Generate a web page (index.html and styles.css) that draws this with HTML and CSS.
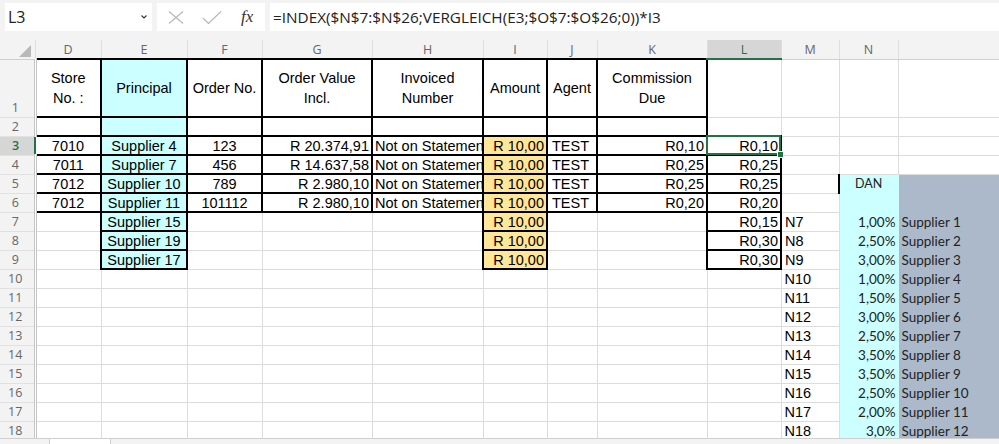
FILE: index.html
```html
<!DOCTYPE html>
<html lang="de">
<head>
  <meta charset="UTF-8">
  <meta name="viewport" content="width=device-width, initial-scale=1.0">
  <title>Provision - Tabelle</title>
  <link rel="stylesheet" href="styles.css">
</head>
<body>
  <div class="app">
    <div class="formula-bar">
      <div class="name-box">
        <span>L3</span>
        <svg width="6" height="4" viewBox="0 0 6 4"><path d="M0.5 0.5 L3 3 L5.5 0.5" fill="none" stroke="#333" stroke-width="1.1"/></svg>
      </div>
      <div class="fx-box">
        <svg class="ico-x" width="16" height="13" viewBox="0 0 16 13"><path d="M1 0.5 L15 12.5 M15 0.5 L1 12.5" stroke="#b8b8b8" stroke-width="1.2"/></svg>
        <svg class="ico-ok" width="20" height="13" viewBox="0 0 20 13"><path d="M1 7 L6.5 12.5 L19 0.5" fill="none" stroke="#b8b8b8" stroke-width="1.2"/></svg>
        <span class="fx">fx</span>
      </div>
      <div class="formula">=INDEX($N$7:$N$26;VERGLEICH(E3;$O$7:$O$26;0))*I3</div>
    </div>

    <div class="sheet">
      <table class="grid">
        <colgroup>
          <col style="width:35px">
          <col style="width:66px">
          <col style="width:86px">
          <col style="width:75px">
          <col style="width:110px">
          <col style="width:111px">
          <col style="width:64px">
          <col style="width:50px">
          <col style="width:110px">
          <col style="width:74px">
          <col style="width:58px">
          <col style="width:59px">
          <col style="width:120px">
        </colgroup>
        <thead>
          <tr class="col-head">
            <th class="corner"><span class="tri"></span></th>
            <th>D</th><th>E</th><th>F</th><th>G</th><th>H</th><th>I</th><th>J</th><th>K</th>
            <th class="active">L</th><th>M</th><th>N</th><th></th>
          </tr>
        </thead>
        <tbody>
          <tr class="r-head">
            <th>1</th>
            <td class="bx ctr">Store<br>No. :</td>
            <td class="bx ctr cy">Principal</td>
            <td class="bx ctr">Order No.</td>
            <td class="bx ctr">Order Value<br>Incl.</td>
            <td class="bx ctr">Invoiced<br>Number</td>
            <td class="bx ctr">Amount</td>
            <td class="bx ctr">Agent</td>
            <td class="bx ctr">Commission<br>Due</td>
            <td></td><td></td><td></td><td></td>
          </tr>
          <tr>
            <th>2</th>
            <td class="bx"></td><td class="bx cy"></td><td class="bx"></td><td class="bx"></td>
            <td class="bx"></td><td class="bx"></td><td class="bx"></td><td class="bx"></td>
            <td></td><td></td><td></td><td></td>
          </tr>
          <tr>
            <th class="active">3</th>
            <td class="bx ctr">7010</td><td class="bx ctr cy">Supplier 4</td><td class="bx ctr">123</td>
            <td class="bx rt">R 20.374,91</td><td class="bx">Not on Statement</td><td class="bx rt yl">R 10,00</td>
            <td class="bx agent">TEST</td><td class="bx rt">R0,10</td><td class="bx rt sel">R0,10</td>
            <td></td><td></td><td></td>
          </tr>
          <tr>
            <th>4</th>
            <td class="bx ctr">7011</td><td class="bx ctr cy">Supplier 7</td><td class="bx ctr">456</td>
            <td class="bx rt">R 14.637,58</td><td class="bx">Not on Statement</td><td class="bx rt yl">R 10,00</td>
            <td class="bx agent">TEST</td><td class="bx rt">R0,25</td><td class="bx rt">R0,25</td>
            <td></td><td></td><td></td>
          </tr>
          <tr>
            <th>5</th>
            <td class="bx ctr">7012</td><td class="bx ctr cy">Supplier 10</td><td class="bx ctr">789</td>
            <td class="bx rt">R 2.980,10</td><td class="bx">Not on Statement</td><td class="bx rt yl">R 10,00</td>
            <td class="bx agent">TEST</td><td class="bx rt">R0,25</td><td class="bx rt">R0,25</td>
            <td></td><td class="nf dan">DAN</td><td class="of"></td>
          </tr>
          <tr>
            <th>6</th>
            <td class="bx ctr">7012</td><td class="bx ctr cy">Supplier 11</td><td class="bx ctr">101112</td>
            <td class="bx rt">R 2.980,10</td><td class="bx">Not on Statement</td><td class="bx rt yl">R 10,00</td>
            <td class="bx agent">TEST</td><td class="bx rt">R0,20</td><td class="bx rt">R0,20</td>
            <td></td><td class="nf"></td><td class="of"></td>
          </tr>
          <tr>
            <th>7</th>
            <td></td><td class="bx ctr cy">Supplier 15</td><td></td><td></td><td></td>
            <td class="bx rt yl">R 10,00</td><td></td><td></td><td class="bx rt">R0,15</td>
            <td class="ref">N7</td><td class="nf">1,00%</td><td class="of">Supplier 1</td>
          </tr>
          <tr>
            <th>8</th>
            <td></td><td class="bx ctr cy">Supplier 19</td><td></td><td></td><td></td>
            <td class="bx rt yl">R 10,00</td><td></td><td></td><td class="bx rt">R0,30</td>
            <td class="ref">N8</td><td class="nf">2,50%</td><td class="of">Supplier 2</td>
          </tr>
          <tr>
            <th>9</th>
            <td></td><td class="bx ctr cy">Supplier 17</td><td></td><td></td><td></td>
            <td class="bx rt yl">R 10,00</td><td></td><td></td><td class="bx rt">R0,30</td>
            <td class="ref">N9</td><td class="nf">3,00%</td><td class="of">Supplier 3</td>
          </tr>
          <tr>
            <th>10</th>
            <td></td><td></td><td></td><td></td><td></td><td></td><td></td><td></td><td></td>
            <td class="ref">N10</td><td class="nf">1,00%</td><td class="of">Supplier 4</td>
          </tr>
          <tr>
            <th>11</th>
            <td></td><td></td><td></td><td></td><td></td><td></td><td></td><td></td><td></td>
            <td class="ref">N11</td><td class="nf">1,50%</td><td class="of">Supplier 5</td>
          </tr>
          <tr>
            <th>12</th>
            <td></td><td></td><td></td><td></td><td></td><td></td><td></td><td></td><td></td>
            <td class="ref">N12</td><td class="nf">3,00%</td><td class="of">Supplier 6</td>
          </tr>
          <tr>
            <th>13</th>
            <td></td><td></td><td></td><td></td><td></td><td></td><td></td><td></td><td></td>
            <td class="ref">N13</td><td class="nf">2,50%</td><td class="of">Supplier 7</td>
          </tr>
          <tr>
            <th>14</th>
            <td></td><td></td><td></td><td></td><td></td><td></td><td></td><td></td><td></td>
            <td class="ref">N14</td><td class="nf">3,50%</td><td class="of">Supplier 8</td>
          </tr>
          <tr>
            <th>15</th>
            <td></td><td></td><td></td><td></td><td></td><td></td><td></td><td></td><td></td>
            <td class="ref">N15</td><td class="nf">3,50%</td><td class="of">Supplier 9</td>
          </tr>
          <tr>
            <th>16</th>
            <td></td><td></td><td></td><td></td><td></td><td></td><td></td><td></td><td></td>
            <td class="ref">N16</td><td class="nf">2,50%</td><td class="of">Supplier 10</td>
          </tr>
          <tr>
            <th>17</th>
            <td></td><td></td><td></td><td></td><td></td><td></td><td></td><td></td><td></td>
            <td class="ref">N17</td><td class="nf">2,00%</td><td class="of">Supplier 11</td>
          </tr>
          <tr>
            <th>18</th>
            <td></td><td></td><td></td><td></td><td></td><td></td><td></td><td></td><td></td>
            <td class="ref">N18</td><td class="nf">3,0%</td><td class="of">Supplier 12</td>
          </tr>
        </tbody>
      </table>
    </div>

    <div class="tabs">
      <span class="tab-btn"></span>
      <span class="tab"></span>
    </div>
  </div>
</body>
</html>
```

FILE: styles.css
```css
body {
  margin: 0;
  background: #fff;
  font-family: 'Liberation Sans', Arial, sans-serif;
  color: #000;
}

.app {
  width: 999px;
  height: 444px;
  overflow: hidden;
  display: flex;
  flex-direction: column;
}

/* formula bar */
.formula-bar {
  height: 40px;
  flex: none;
  box-sizing: border-box;
  background: #f3f3f3;
  display: flex;
  gap: 5px;
  padding: 3px 0 9px 5px;
  font-family: 'Open Sans', 'Noto Sans', sans-serif;
}

.name-box {
  width: 147px;
  background: #fff;
  display: flex;
  align-items: center;
  justify-content: space-between;
  padding: 0 5px 0 3px;
  box-sizing: border-box;
  font-size: 16px;
  color: #222;
}

.fx-box {
  width: 108px;
  background: #fff;
  display: flex;
  align-items: center;
  padding-left: 11px;
  box-sizing: border-box;
}

.ico-ok {
  margin-left: 18px;
}

.fx {
  margin-left: 19px;
  font-family: 'Liberation Serif', serif;
  font-style: italic;
  font-size: 17px;
  color: #333;
}

.formula {
  flex: 1;
  background: #fff;
  display: flex;
  align-items: center;
  padding-left: 3px;
  font-size: 15.3px;
  color: #222;
  white-space: nowrap;
}

/* sheet */
.sheet {
  height: 398px;
  flex: none;
  overflow: hidden;
}

.grid {
  border-collapse: collapse;
  table-layout: fixed;
  width: 1018px;
}

.col-head th {
  height: 18px;
  padding: 0;
  background: #f3f3f3;
  border-right: 1px solid #dedede;
  border-bottom: 1px solid #cfcfcf;
  font-family: 'Open Sans', 'Noto Sans', sans-serif;
  font-size: 12.5px;
  font-weight: normal;
  color: #666;
}

.col-head th.active {
  background: #d6d6d6;
  color: #217346;
  border-bottom: 2px solid #217346;
}

.corner {
  position: relative;
}

.tri {
  position: absolute;
  right: 4px;
  bottom: 2px;
  width: 0;
  height: 0;
  border-left: 12px solid transparent;
  border-bottom: 12px solid #b9b9b9;
}

tbody tr {
  height: 19px;
}

tbody tr.r-head {
  height: 58px;
}

tbody th {
  padding: 0 3px 1px 0;
  background: #f3f3f3;
  border-right: 3px double #c4c4c4;
  border-bottom: 1px solid #e1e1e1;
  vertical-align: bottom;
  font-family: 'Open Sans', 'Noto Sans', sans-serif;
  font-size: 12.5px;
  font-weight: normal;
  line-height: 16px;
  color: #666;
}

tbody th.active {
  background: #d6d6d6;
  color: #217346;
  font-weight: 600;
  border-right: 2px solid #217346;
}

td {
  padding: 0 2px;
  border: 1px solid #dcdcdc;
  font-size: 14.5px;
  line-height: 16px;
  white-space: nowrap;
  overflow: hidden;
  vertical-align: middle;
}

.r-head td {
  line-height: 20px;
}

.bx {
  border: 2px solid #000;
}

.ctr {
  text-align: center;
}

.rt {
  text-align: right;
}

.agent {
  padding-left: 4px;
}

.cy {
  background: #ccffff;
}

.yl {
  background: #ffe699;
}

.ref {
  padding-left: 3px;
}

.nf {
  background: #ccffff;
  border-color: #ccffff;
  text-align: right;
  font-family: Lato, 'Open Sans', sans-serif;
  font-size: 13.5px;
  color: #222;
}

.nf.dan {
  text-align: center;
  font-size: 12.5px;
  border-left: 2px solid #000;
}

.of {
  background: #acb9ca;
  border-color: #acb9ca;
  padding-left: 3px;
  font-family: Lato, 'Open Sans', sans-serif;
  font-size: 13.5px;
  color: #222;
}

/* active cell */
.sel {
  position: relative;
  overflow: visible;
}

.sel::after {
  content: "";
  position: absolute;
  top: -2px;
  left: -2px;
  right: -1px;
  bottom: -1px;
  border: 2px solid #217346;
}

.sel::before {
  content: "";
  position: absolute;
  right: -4px;
  bottom: -4px;
  width: 5px;
  height: 5px;
  background: #217346;
  border: 1px solid #fff;
  z-index: 1;
}

/* sheet tabs strip */
.tabs {
  flex: 1;
  background: #f3f3f3;
  border-top: 1px solid #cfcfcf;
  display: flex;
  padding-left: 35px;
}

.tab-btn {
  width: 14px;
  border-right: 1px solid #cfcfcf;
}

.tab {
  width: 60px;
  border-right: 1px solid #cfcfcf;
  background: #fff;
}
```
